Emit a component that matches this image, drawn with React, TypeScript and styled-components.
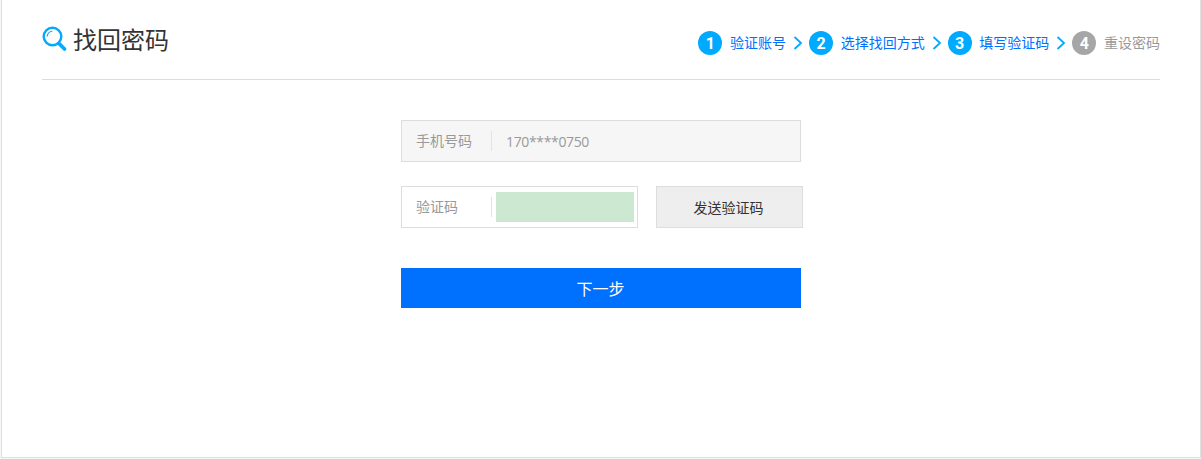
import styled, {createGlobalStyle} from 'styled-components'
import {Fragment, FunctionComponent} from 'react'

const GlobalStyle = createGlobalStyle`
  html, body {
    margin: 0;
    padding: 0;
    background: #f6f6f6;
    font-family: "Noto Sans CJK SC", "Liberation Sans", sans-serif;
  }
`

const Page = styled.div`
  box-sizing: border-box;
  width: 1200px;
  height: 458px;
  margin-left: 1px;
  padding: 0 40px;
  background: #fff;
  border: 1px solid #e0e0e0;
  border-top: none;
`

const Header = styled.div`
  display: flex;
  justify-content: space-between;
  height: 79px;
  border-bottom: 1px solid #ddd;
`

const Title = styled.h1`
  display: flex;
  align-items: center;
  gap: 6px;
  height: 54px;
  margin: 11px 0 0;
  font-size: 24px;
  font-weight: 400;
  color: #333;

  svg {
    margin-top: 2px;
  }
`

const Steps = styled.div`
  display: flex;
  align-items: center;
  height: 24px;
  margin-top: 31px;
`

const Circle = styled.span<{$active: boolean}>`
  display: flex;
  align-items: center;
  justify-content: center;
  width: 24px;
  height: 24px;
  margin-right: 7.67px;
  border-radius: 50%;
  background: ${p => (p.$active ? '#00aaff' : '#a6a6a6')};
  color: #fff;
  font-family: "Roboto", sans-serif;
  font-size: 16px;
  font-weight: 700;
`

const StepLabel = styled.span<{$active: boolean}>`
  padding-bottom: 2px;
  font-size: 14px;
  color: ${p => (p.$active ? '#0070ff' : '#999')};
`

const Arrow = styled.svg`
  width: 10px;
  height: 14px;
  margin: 0 6px 0 7px;
`

const Form = styled.div`
  display: flex;
  flex-direction: column;
  width: 402px;
  margin: 40px 0 0 359px;
`

const Row = styled.div`
  display: flex;
  justify-content: space-between;
  margin-bottom: 24px;
`

const Field = styled.div<{$width: number; $filled?: boolean}>`
  box-sizing: border-box;
  display: flex;
  align-items: center;
  width: ${p => p.$width}px;
  height: 42px;
  padding: 0 3px 0 14px;
  background: ${p => (p.$filled ? '#f6f6f6' : '#fff')};
  border: 1px solid #ddd;
`

const Label = styled.span`
  box-sizing: border-box;
  width: 76px;
  height: 20px;
  border-right: 1px solid #e3e3e3;
  font-size: 14px;
  line-height: 19px;
  color: #999;
`

const Value = styled.span`
  margin-left: 14px;
  font-family: "Open Sans", "Noto Sans CJK SC", sans-serif;
  font-size: 14px;
  letter-spacing: -0.35px;
  color: #999;
`

const CodeInput = styled.input`
  box-sizing: border-box;
  width: 138px;
  height: 30px;
  margin-left: 4px;
  padding: 0 8px;
  background: #cde8d0;
  border: none;
  outline: none;
`

const SendButton = styled.button`
  box-sizing: border-box;
  width: 147px;
  height: 42px;
  padding: 0 8px 0 6px;
  background: #eee;
  border: 1px solid #ddd;
  font-family: inherit;
  font-size: 14px;
  color: #333;
`

const NextButton = styled.button`
  width: 400px;
  height: 40px;
  margin-top: 16px;
  padding: 0 1px 0 0;
  background: #0070ff;
  border: none;
  font-family: inherit;
  font-size: 16px;
  color: #fff;
`

const SearchIcon: FunctionComponent = () => (
  <svg width="25" height="26" viewBox="0 0 25 26" fill="none" stroke="#00aaff">
    <circle cx="10.5" cy="10.5" r="8.8" strokeWidth="2.4"/>
    <path d="M5 10.5C5.5 7.5 7.5 5.5 10.5 5" strokeWidth="1.2"/>
    <path d="M17 17.5L22.5 23" strokeWidth="3.6" strokeLinecap="round"/>
  </svg>
)

const steps = [
  {n: 1, label: '验证账号', active: true},
  {n: 2, label: '选择找回方式', active: true},
  {n: 3, label: '填写验证码', active: true},
  {n: 4, label: '重设密码', active: false},
]

const App: FunctionComponent = () => {
  return (
    <Page>
      <GlobalStyle/>
      <Header>
        <Title>
          <SearchIcon/>
          找回密码
        </Title>
        <Steps>
          {steps.map((step, i) => (
            <Fragment key={step.n}>
              <Circle $active={step.active}>{step.n}</Circle>
              <StepLabel $active={step.active}>{step.label}</StepLabel>
              {i < steps.length - 1 && (
                <Arrow viewBox="0 0 10 14" fill="none" stroke="#00aaff" strokeWidth="1.8">
                  <path d="M1.5 1L8 7L1.5 13"/>
                </Arrow>
              )}
            </Fragment>
          ))}
        </Steps>
      </Header>
      <Form>
        <Row>
          <Field $width={400} $filled>
            <Label>手机号码</Label>
            <Value>170****0750</Value>
          </Field>
        </Row>
        <Row>
          <Field $width={237}>
            <Label>验证码</Label>
            <CodeInput/>
          </Field>
          <SendButton>发送验证码</SendButton>
        </Row>
        <NextButton>下一步</NextButton>
      </Form>
    </Page>
  )
}

export default App
